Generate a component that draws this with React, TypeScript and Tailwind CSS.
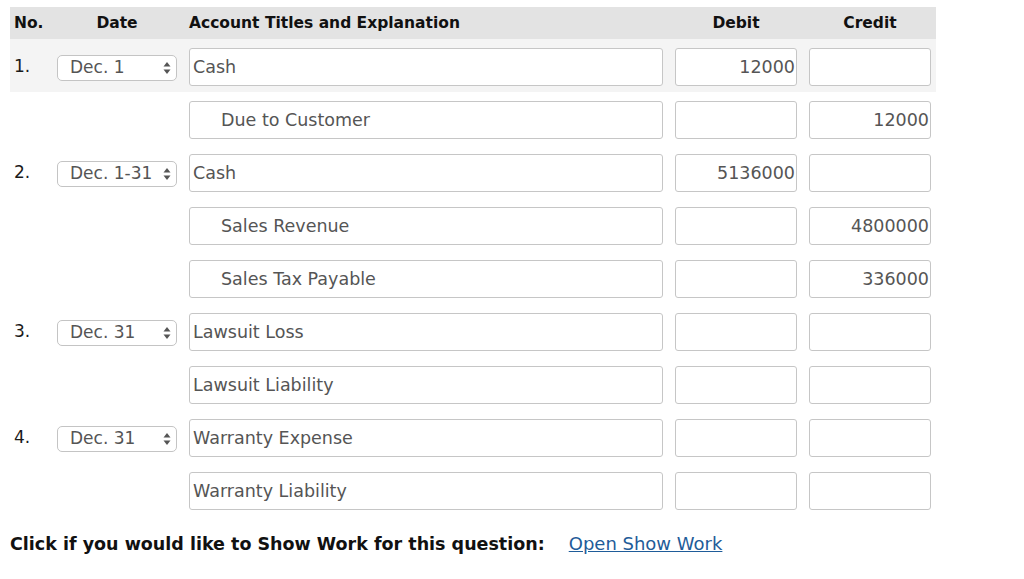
const rows = [
  { no: '1.', date: 'Dec. 1', account: 'Cash', indent: false, debit: '12000', credit: '', shaded: true },
  { account: 'Due to Customer', indent: true, debit: '', credit: '12000' },
  { no: '2.', date: 'Dec. 1-31', account: 'Cash', indent: false, debit: '5136000', credit: '' },
  { account: 'Sales Revenue', indent: true, debit: '', credit: '4800000' },
  { account: 'Sales Tax Payable', indent: true, debit: '', credit: '336000' },
  { no: '3.', date: 'Dec. 31', account: 'Lawsuit Loss', indent: false, debit: '', credit: '' },
  { account: 'Lawsuit Liability', indent: false, debit: '', credit: '' },
  { no: '4.', date: 'Dec. 31', account: 'Warranty Expense', indent: false, debit: '', credit: '' },
  { account: 'Warranty Liability', indent: false, debit: '', credit: '' },
]

type Row = {
  no?: string
  date?: string
  account: string
  indent: boolean
  debit: string
  credit: string
  shaded?: boolean
}

function DateSelect({ value }: { value: string }) {
  return (
    <div className="mt-[1px] flex h-[26px] w-[120px] items-center justify-between rounded-[5px] border border-[#c4c4c4] bg-white pl-[12px] pr-[5px] text-[17px] text-[#555]">
      <span>{value}</span>
      <svg width="8" height="14" viewBox="0 0 8 14" className="shrink-0">
        <path d="M4 1 L7.5 5.5 L0.5 5.5 Z" fill="#555" />
        <path d="M4 13 L7.5 8.5 L0.5 8.5 Z" fill="#555" />
      </svg>
    </div>
  )
}

function Field({ value, right, indent, width }: { value: string; right?: boolean; indent?: boolean; width: string }) {
  return (
    <input
      readOnly
      value={value}
      className={`${width} h-[38px] shrink-0 rounded-[3px] border border-[#c6c6c6] bg-white text-[17.5px] text-[#555] outline-none ${
        right ? 'pr-[1px] text-right' : indent ? 'pl-[31px]' : 'pl-[3px]'
      }`}
    />
  )
}

function EntryRow({ row }: { row: Row }) {
  return (
    <div className={`flex h-[53px] items-start pt-[9px] ${row.shaded ? 'bg-[#f4f4f4]' : ''}`}>
      <div className="flex h-[38px] w-[47px] shrink-0 items-center pb-[1px] pl-[4px] text-[17px] text-[#1a1a1a]">
        {row.no}
      </div>
      <div className="flex h-[38px] w-[132px] shrink-0 items-center">
        {row.date && <DateSelect value={row.date} />}
      </div>
      <Field value={row.account} indent={row.indent} width="w-[474px]" />
      <div className="w-[12px] shrink-0" />
      <Field value={row.debit} right width="w-[122px]" />
      <div className="w-[12px] shrink-0" />
      <Field value={row.credit} right width="w-[122px]" />
    </div>
  )
}

export default function App() {
  return (
    <div className="h-[579px] w-[1024px] bg-white font-['DejaVu_Sans',Verdana,sans-serif]">
      <div className="ml-[10px] w-[926px] pt-[7px]">
        <div className="flex h-[32px] items-center bg-[#e3e3e3] pt-[2px] text-[15.5px] font-bold text-[#111]">
          <div className="w-[47px] shrink-0 pl-[4px]">No.</div>
          <div className="w-[120px] shrink-0 text-center">Date</div>
          <div className="w-[12px] shrink-0" />
          <div className="w-[474px] shrink-0">Account Titles and Explanation</div>
          <div className="w-[12px] shrink-0" />
          <div className="w-[122px] shrink-0 text-center">Debit</div>
          <div className="w-[12px] shrink-0" />
          <div className="w-[122px] shrink-0 text-center">Credit</div>
        </div>
        {rows.map((r, i) => (
          <EntryRow key={i} row={r as Row} />
        ))}
      </div>
      <div className="ml-[10px] mt-[14px] flex items-baseline">
        <span className="text-[17.5px] font-bold text-[#111]">
          Click if you would like to Show Work for this question:
        </span>
        <a href="#" className="ml-[24px] text-[18px] text-[#1f5c99] underline">
          Open Show Work
        </a>
      </div>
    </div>
  )
}
